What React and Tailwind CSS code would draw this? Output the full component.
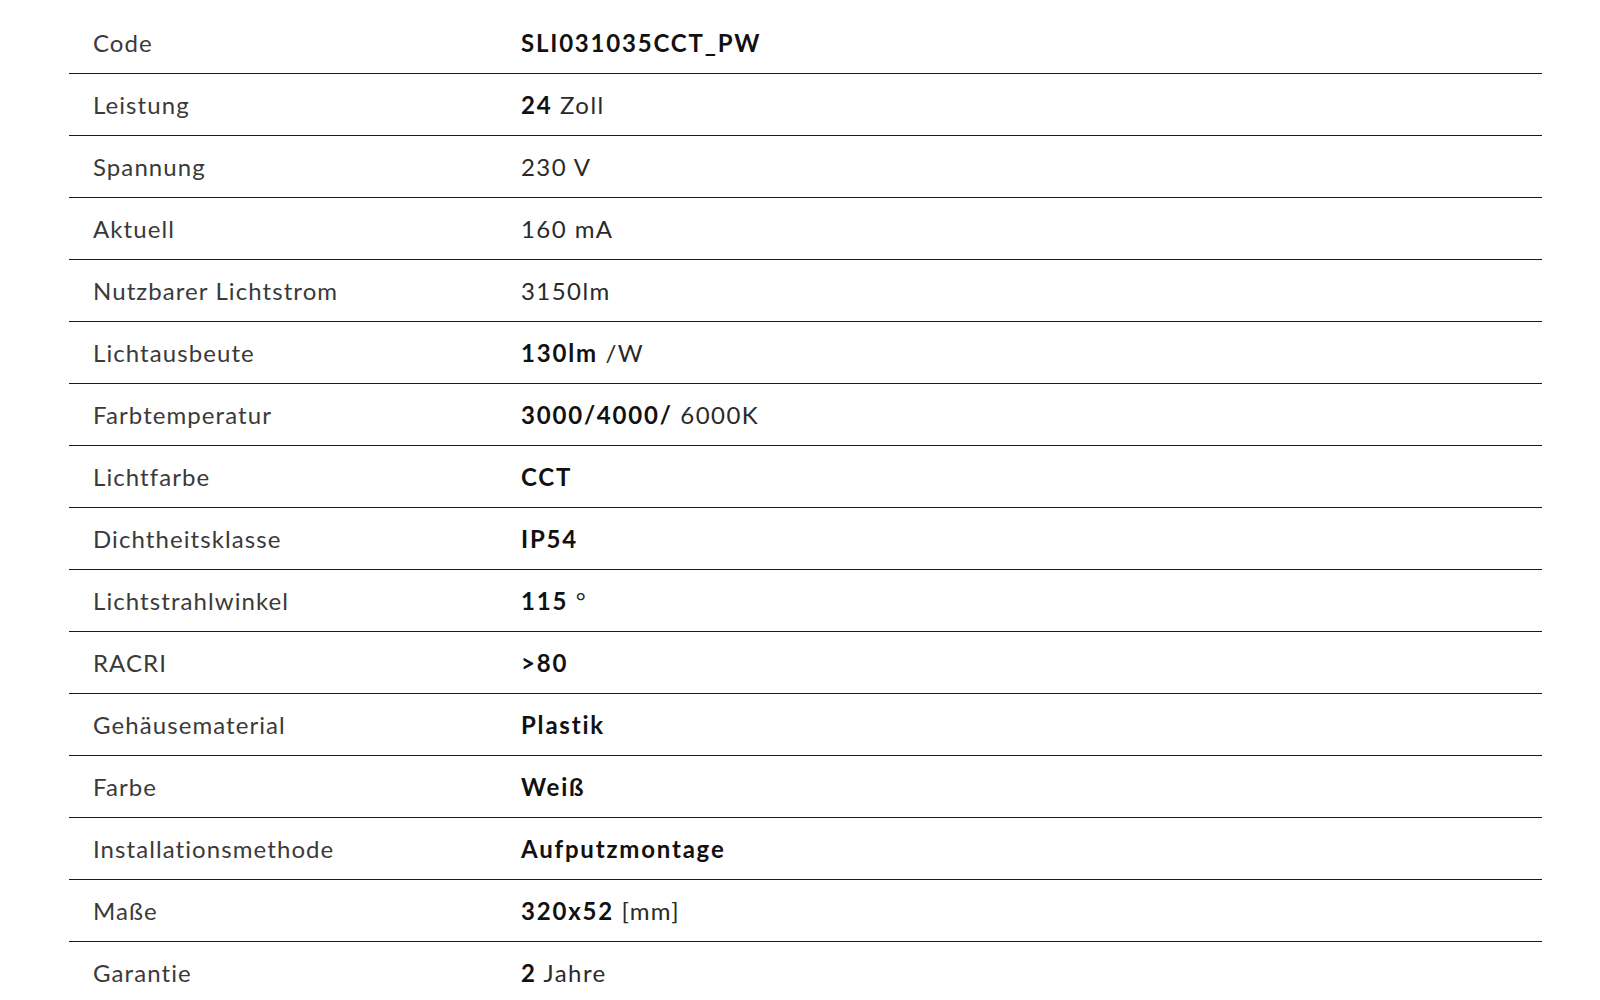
import React from 'react';

const rows = [
  { label: 'Code', bold: 'SLI031035CCT_PW', rest: '' },
  { label: 'Leistung', bold: '24', rest: ' Zoll' },
  { label: 'Spannung', bold: '', rest: '230 V' },
  { label: 'Aktuell', bold: '', rest: '160 mA' },
  { label: 'Nutzbarer Lichtstrom', bold: '', rest: '3150lm' },
  { label: 'Lichtausbeute', bold: '130lm', rest: ' /W' },
  { label: 'Farbtemperatur', bold: '3000/4000/', rest: ' 6000K' },
  { label: 'Lichtfarbe', bold: 'CCT', rest: '' },
  { label: 'Dichtheitsklasse', bold: 'IP54', rest: '' },
  { label: 'Lichtstrahlwinkel', bold: '115', rest: ' °' },
  { label: 'RACRI', bold: '>80', rest: '' },
  { label: 'Gehäusematerial', bold: 'Plastik', rest: '' },
  { label: 'Farbe', bold: 'Weiß', rest: '' },
  { label: 'Installationsmethode', bold: 'Aufputzmontage', rest: '' },
  { label: 'Maße', bold: '320x52', rest: ' [mm]' },
  { label: 'Garantie', bold: '2', rest: ' Jahre' },
];

export default function App() {
  return (
    <div className="min-h-screen bg-white pt-[12px] font-['Lato','Noto_Sans',sans-serif]">
      <div className="ml-[69px] w-[1473px]">
        {rows.map((r, i) => (
          <div
            key={r.label}
            className={
              'flex h-[62px] items-center text-[24px] ' +
              (i < rows.length - 1 ? 'border-b border-[#1a1a1a]' : '')
            }
          >
            <div className="w-[452px] pl-[24px] tracking-[0.045em] text-[#3a3a3a]">{r.label}</div>
            <div className="tracking-[0.06em] text-[#2a2a2a]">
              {r.bold && <span className="font-bold tracking-[0.075em] text-[#111]">{r.bold}</span>}
              {r.rest && <span className="whitespace-pre">{r.rest}</span>}
            </div>
          </div>
        ))}
      </div>
    </div>
  );
}
